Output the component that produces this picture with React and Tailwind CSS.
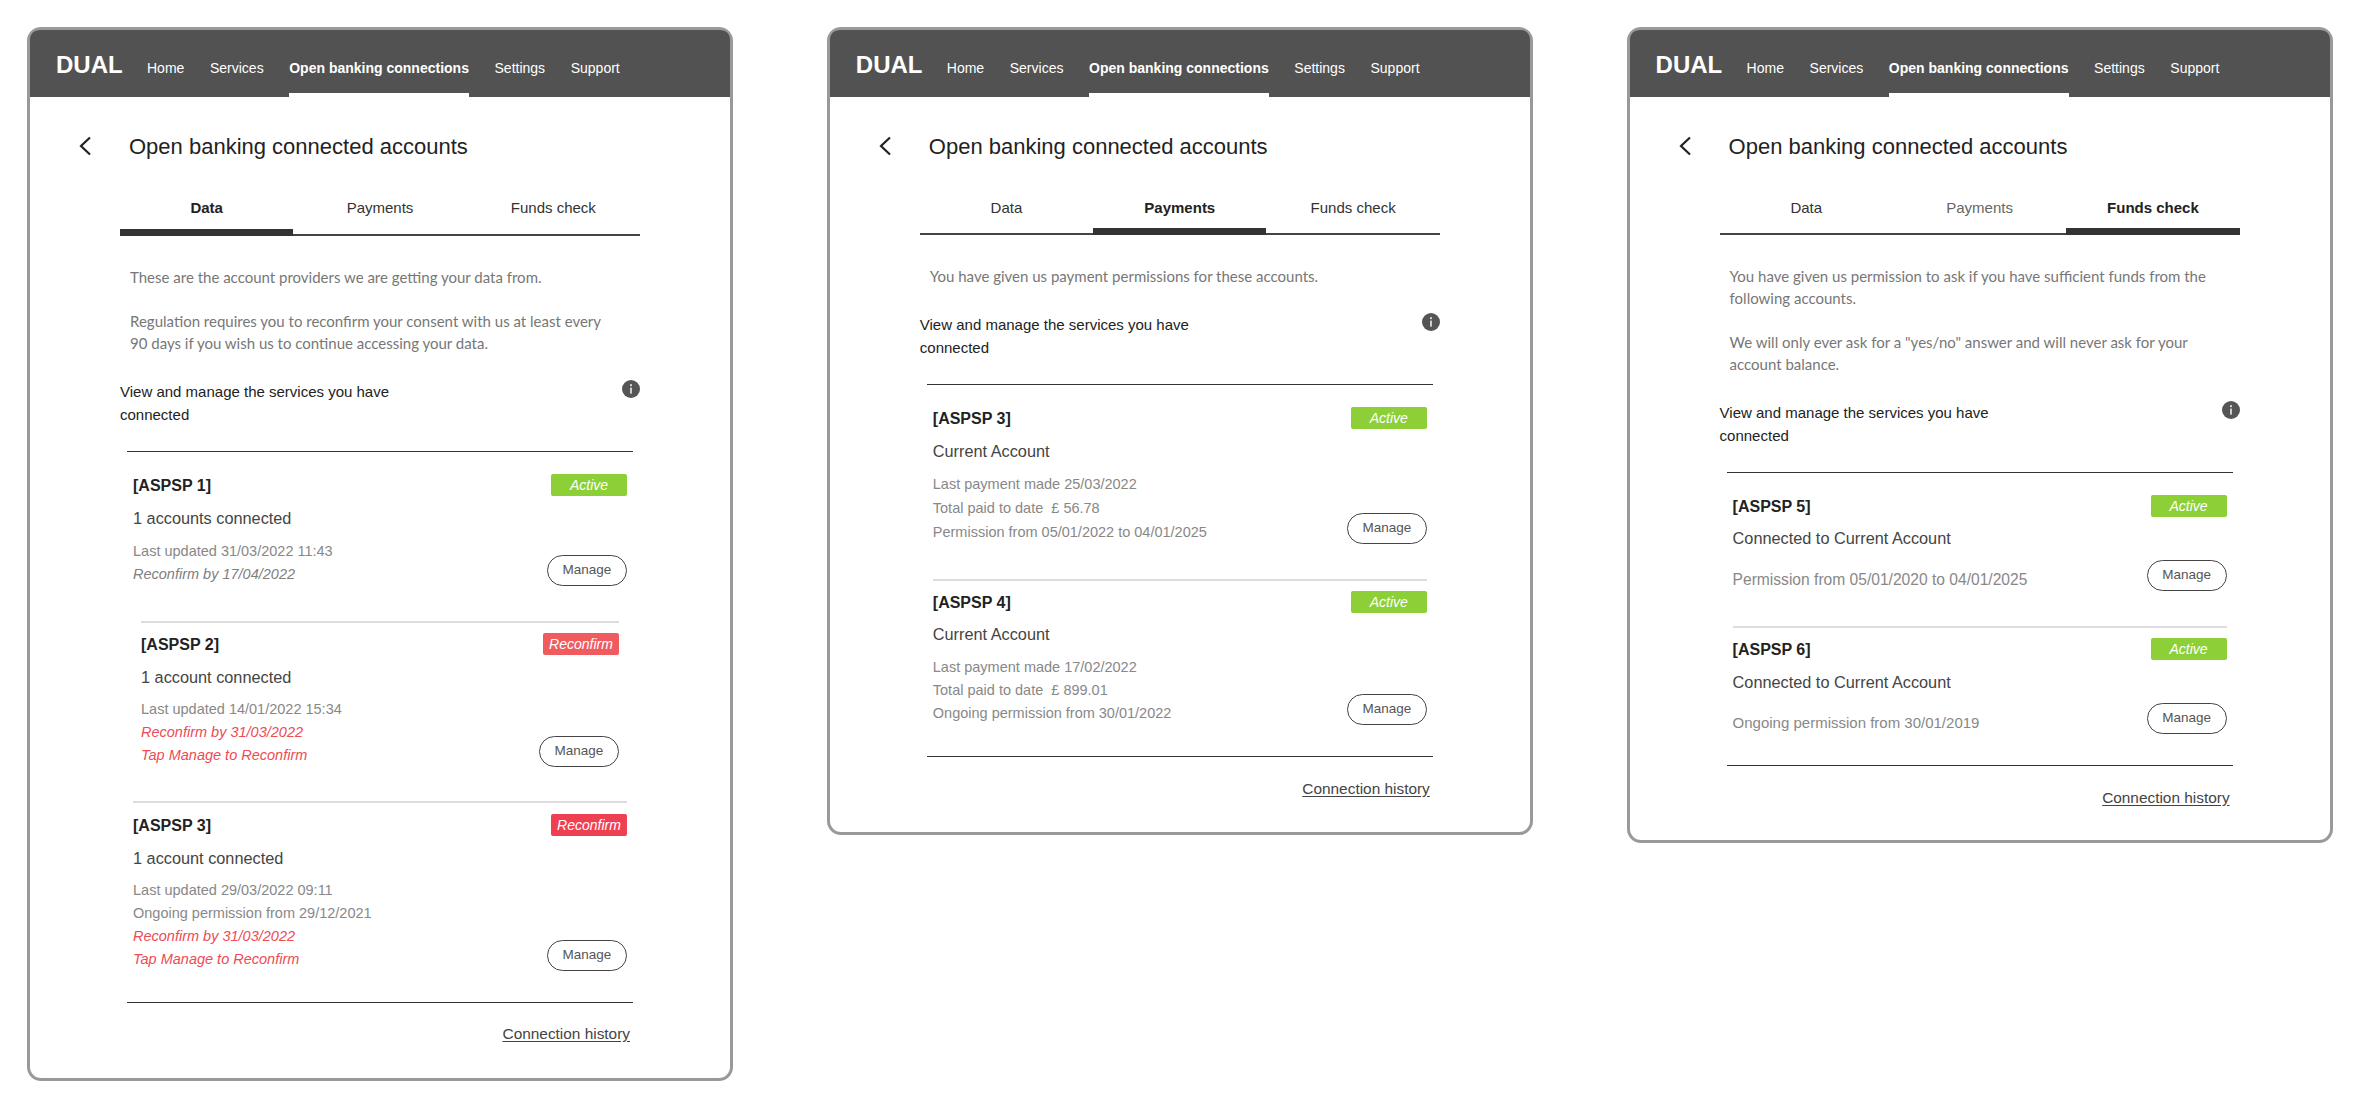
const SANS = { fontFamily: '"Liberation Sans", Arial, sans-serif' };

function Header() {
  const links = ["Home", "Services", "Open banking connections", "Settings", "Support"];
  return (
    <div className="flex h-[67px] items-stretch rounded-t-[9px] bg-[#525252] pl-[26px] text-white">
      <div className="flex w-[91px] items-center pt-[2px] text-[24px] leading-[30px] font-bold">DUAL</div>
      <div className="flex gap-[25.6px]">
        {links.map((l) => (
          <div
            key={l}
            className={
              l === "Open banking connections"
                ? "flex items-center border-b-4 border-white pt-[13px] text-[14px] font-bold"
                : "flex items-center border-b-4 border-transparent pt-[13px] text-[14px]"
            }
          >
            {l}
          </div>
        ))}
      </div>
    </div>
  );
}

function Title() {
  return (
    <div className="mt-[33px] flex h-[32px] items-center gap-[37px] pl-[48px] text-[#222]">
      <svg width="14" height="20" viewBox="0 0 14 20" fill="none">
        <path d="M12 1.5 L3 10 L12 18.5" stroke="#222" strokeWidth="2.2" />
      </svg>
      <div className="pt-px text-[22px] leading-[32px]">Open banking connected accounts</div>
    </div>
  );
}

function Tabs({ active, tall, dim }) {
  const names = ["Data", "Payments", "Funds check"];
  return (
    <div className="mx-[90px] mt-[30px] flex w-[520px]">
      {names.map((n) => (
        <div
          key={n}
          className={
            (tall ? "h-[44px] " : "h-[43px] ") +
            (n === active
              ? "flex-1 border-b-[7px] border-[#333] pt-[6px] text-center text-[15px] leading-[20px] font-bold text-[#222]"
              : n === dim
              ? "flex-1 border-b-2 border-[#444] pt-[6px] text-center text-[15px] leading-[20px] text-[#666]"
              : "flex-1 border-b-2 border-[#444] pt-[6px] text-center text-[15px] leading-[20px] text-[#333]")
          }
        >
          {n}
        </div>
      ))}
    </div>
  );
}

function Info() {
  return (
    <svg width="18" height="18" viewBox="0 0 18 18" className="shrink-0">
      <circle cx="9" cy="9" r="9" fill="#555" />
      <circle cx="9" cy="5.2" r="1.1" fill="#ddd" />
      <rect x="8.1" y="7.6" width="1.8" height="6" fill="#ddd" />
    </svg>
  );
}

function Intro({ paras }) {
  return (
    <div
      className="mx-[100px] mt-[30px] w-[482px] pb-px text-[15px] leading-[22px] text-[#777]"
      style={{ fontFamily: "Lato, sans-serif" }}
    >
      {paras.map((p, i) => (
        <p key={i} className={i > 0 ? "mt-[22px]" : ""}>
          {p}
        </p>
      ))}
    </div>
  );
}

function ViewRow() {
  return (
    <div className="mt-[25px] flex items-start justify-between">
      <div className="w-[300px] text-[15px] leading-[23px] text-[#222]">View and manage the services you have connected</div>
      <Info />
    </div>
  );
}

function Badge({ kind }) {
  const cls =
    kind === "Active"
      ? "bg-[#8ccf36]"
      : kind === "soft"
      ? "bg-[#ef5b5f]"
      : "bg-[#ee4050]";
  return (
    <div className={"flex h-[22px] w-[76px] items-center justify-center rounded-[2px] text-[14px] leading-[20px] italic text-white " + cls}>
      {kind === "Active" ? "Active" : "Reconfirm"}
    </div>
  );
}

function Line({ t, lh, size }) {
  const base = lh === "24" ? "leading-[24px] " : "leading-[23px] ";
  const color =
    t.kind === "red"
      ? "italic text-[#ee4b55]"
      : t.kind === "it"
      ? "italic text-[#808080]"
      : "text-[#888]";
  return <div className={(size || "text-[14.5px]") + " " + base + color}>{t.text}</div>;
}

function Item({ cls, title, badge, sub, subGap, lines, lineGap, lh, size }) {
  return (
    <div className={cls}>
      <div className="flex h-[22px] items-center justify-between">
        <div className="pt-px text-[16px] leading-[22px] font-bold text-[#222]">{title}</div>
        <Badge kind={badge} />
      </div>
      <div className={subGap + " pb-[2px] text-[16.3px] leading-[20px] text-[#444]"}>{sub}</div>
      <div className={lineGap + " flex items-end justify-between"}>
        <div>
          {lines.map((t, i) => (
            <Line key={i} t={t} lh={lh} size={size} />
          ))}
        </div>
        <div className="flex h-[31px] w-[80px] items-center justify-center rounded-full border border-[#444] text-[13.5px] text-[#555]">
          Manage
        </div>
      </div>
    </div>
  );
}

function History({ cls }) {
  return (
    <div className={cls + " flex justify-end pr-[10px]"}>
      <span className="text-[15.4px] leading-[22px] text-[#444] underline underline-offset-2">Connection history</span>
    </div>
  );
}

const g = (text) => ({ text });
const it = (text) => ({ text, kind: "it" });
const r = (text) => ({ text, kind: "red" });

export default function App() {
  return (
    <div className="flex min-h-[1108px] w-[2360px] items-start gap-[93.8px] bg-white pl-[27px] pt-[27px]" style={SANS}>
      {/* Data */}
      <div className="h-[1054px] w-[706px] rounded-[14px] border-[3px] border-[#999]">
        <Header />
        <Title />
        <Tabs active="Data" tall />
        <Intro
          paras={[
            "These are the account providers we are getting your data from.",
            "Regulation requires you to reconfirm your consent with us at least every 90 days if you wish us to continue accessing your data.",
          ]}
        />
        <div className="mx-[90px] w-[520px]">
          <ViewRow />
          <div className="mx-[7px] mt-[25px] border-y border-[#333]">
            <Item
              cls="mx-[6px] pt-[22px] pb-[35px]"
              title="[ASPSP 1]"
              badge="Active"
              sub="1 accounts connected"
              subGap="mt-[12px]"
              lineGap="mt-[10px]"
              lines={[g("Last updated 31/03/2022 11:43"), it("Reconfirm by 17/04/2022")]}
            />
            <Item
              cls="mx-[14px] border-t-2 border-[#ddd] pt-[10px] pb-[34px]"
              title="[ASPSP 2]"
              badge="soft"
              sub="1 account connected"
              subGap="mt-[12px]"
              lineGap="mt-[9px]"
              lines={[g("Last updated 14/01/2022 15:34"), r("Reconfirm by 31/03/2022"), r("Tap Manage to Reconfirm")]}
            />
            <Item
              cls="mx-[6px] border-t-2 border-[#ddd] pt-[11px] pb-[31px]"
              title="[ASPSP 3]"
              badge="Reconfirm"
              sub="1 account connected"
              subGap="mt-[12px]"
              lineGap="mt-[9px]"
              lines={[
                g("Last updated 29/03/2022 09:11"),
                g("Ongoing permission from 29/12/2021"),
                r("Reconfirm by 31/03/2022"),
                r("Tap Manage to Reconfirm"),
              ]}
            />
          </div>
          <History cls="mt-[20px]" />
        </div>
      </div>

      {/* Payments */}
      <div className="h-[808px] w-[706px] rounded-[14px] border-[3px] border-[#999]">
        <Header />
        <Title />
        <Tabs active="Payments" />
        <Intro paras={["You have given us payment permissions for these accounts."]} />
        <div className="mx-[90px] w-[520px]">
          <ViewRow />
          <div className="mx-[7px] mt-[25px] border-y border-[#333]">
            <Item
              cls="mx-[6px] pt-[22px] pb-[35px]"
              title="[ASPSP 3]"
              badge="Active"
              sub="Current Account"
              subGap="mt-[12px]"
              lineGap="mt-[9px]"
              lh="24"
              lines={[
                g("Last payment made 25/03/2022"),
                g("Total paid to date\u00a0\u00a0£ 56.78"),
                g("Permission from 05/01/2022 to 04/01/2025"),
              ]}
            />
            <Item
              cls="mx-[6px] border-t-2 border-[#ddd] pt-[10px] pb-[31px]"
              title="[ASPSP 4]"
              badge="Active"
              sub="Current Account"
              subGap="mt-[11px]"
              lineGap="mt-[10px]"
              lines={[
                g("Last payment made 17/02/2022"),
                g("Total paid to date\u00a0\u00a0£ 899.01"),
                g("Ongoing permission from 30/01/2022"),
              ]}
            />
          </div>
          <History cls="mt-[21px]" />
        </div>
      </div>

      {/* Funds check */}
      <div className="h-[816px] w-[706px] rounded-[14px] border-[3px] border-[#999]">
        <Header />
        <Title />
        <Tabs active="Funds check" dim="Payments" />
        <Intro
          paras={[
            "You have given us permission to ask if you have sufficient funds from the following accounts.",
            'We will only ever ask for a "yes/no" answer and will never ask for your account balance.',
          ]}
        />
        <div className="mx-[90px] w-[520px]">
          <ViewRow />
          <div className="mx-[7px] mt-[25px] border-y border-[#333]">
            <Item
              cls="mx-[6px] pt-[22px] pb-[35px]"
              title="[ASPSP 5]"
              badge="Active"
              sub="Connected to Current Account"
              subGap="mt-[11px]"
              lineGap="mt-[10px]"
              size="text-[15.6px]"
              lines={[g("Permission from 05/01/2020 to 04/01/2025")]}
            />
            <Item
              cls="mx-[6px] border-t-2 border-[#ddd] pt-[10px] pb-[31px]"
              title="[ASPSP 6]"
              badge="Active"
              sub="Connected to Current Account"
              subGap="mt-[12px]"
              lineGap="mt-[9px]"
              size="text-[15px]"
              lines={[g("Ongoing permission from 30/01/2019")]}
            />
          </div>
          <History cls="mt-[21px]" />
        </div>
      </div>
    </div>
  );
}
